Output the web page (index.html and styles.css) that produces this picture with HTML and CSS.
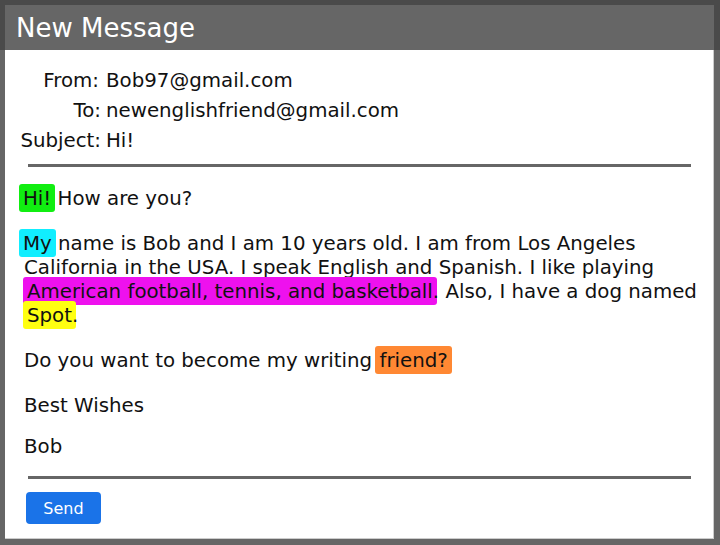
FILE: index.html
```html
<!DOCTYPE html>
<html lang="en">
<head>
    <meta charset="UTF-8">
    <meta name="viewport" content="width=device-width, initial-scale=1.0">
    <title>New Message</title>
    <link rel="stylesheet" href="styles.css">
</head>
<body>
    <div class="window">
        <div class="title-bar">New Message</div>
        <div class="message">
            <div class="fields">
                <span class="label from">From:</span><span class="value">Bob97@gmail.com</span>
                <span class="label">To:</span><span class="value">newenglishfriend@gmail.com</span>
                <span class="label">Subject:</span><span class="value">Hi!</span>
            </div>
            <hr class="divider">
            <div class="body-text">
                <p><span class="mark lead green">Hi!</span> How are you?</p>
                <p><span class="mark lead cyan">My</span> name is Bob and I am 10 years old. I am from Los Angeles California in the USA. I speak English and Spanish. I like playing <span class="mark magenta">American football, tennis, and basketball</span>. Also, I have a dog named <span class="mark yellow">Spot</span>.</p>
                <p>Do you want to become my writing <span class="mark orange">friend?</span></p>
                <p class="closing">Best Wishes</p>
                <p class="closing">Bob</p>
            </div>
            <hr class="divider bottom">
            <button class="send">Send</button>
        </div>
    </div>
</body>
</html>
```

FILE: styles.css
```css
body {
    margin: 0;
    background-color: #666;
    font-family: "DejaVu Sans", Verdana, sans-serif;
    color: #111;
}

.window {
    height: 545px;
    display: flex;
    flex-direction: column;
    box-sizing: border-box;
}

.title-bar {
    background-color: #666;
    color: #fff;
    font-size: 26px;
    height: 45px;
    line-height: 46px;
    padding-left: 11px;
    border: 5px solid #4a4a4a;
    border-bottom: none;
    border-right-width: 6px;
}

.message {
    flex: 1;
    background-color: #fff;
    margin: 0 6px 6px 5px;
    border-right: 1px solid #ccc;
    border-bottom: 1px solid #ccc;
    padding: 16px 6px 0 14px;
    font-size: 19.8px;
}

.fields {
    display: grid;
    grid-template-columns: 82px auto;
    column-gap: 5px;
    line-height: 30px;
    margin-right: 13px;
}

.label {
    text-align: right;
}

.from {
    margin-right: 2px;
}

.divider {
    border: none;
    height: 3px;
    background-color: #666;
    margin: 8px 16px 0 9px;
}

.divider.bottom {
    margin-top: 14px;
}

.body-text {
    padding: 10px 0 0 5px;
    line-height: 24px;
}

.body-text p {
    margin: 10px 0 21px;
}

.body-text p.closing {
    margin-bottom: 17px;
}

.mark {
    padding: 3px 4px 2px;
    margin: 0 -4px 0 -3px;
    border-radius: 3px;
}

.mark.lead {
    margin-left: -5px;
}

.magenta,
.yellow {
    margin-left: -1px;
}

.green {
    background-color: #11ee11;
}

.cyan {
    background-color: #11eeff;
}

.magenta {
    background-color: #ee11ee;
}

.yellow {
    background-color: #ffff11;
}

.orange {
    background-color: #ff8833;
}

.send {
    margin: 13px 0 0 7px;
    background-color: #1a73e8;
    color: #fff;
    border: none;
    border-radius: 4px;
    font-family: "DejaVu Sans", Verdana, sans-serif;
    font-size: 16px;
    width: 75px;
    height: 32px;
    padding: 0;
}
```
